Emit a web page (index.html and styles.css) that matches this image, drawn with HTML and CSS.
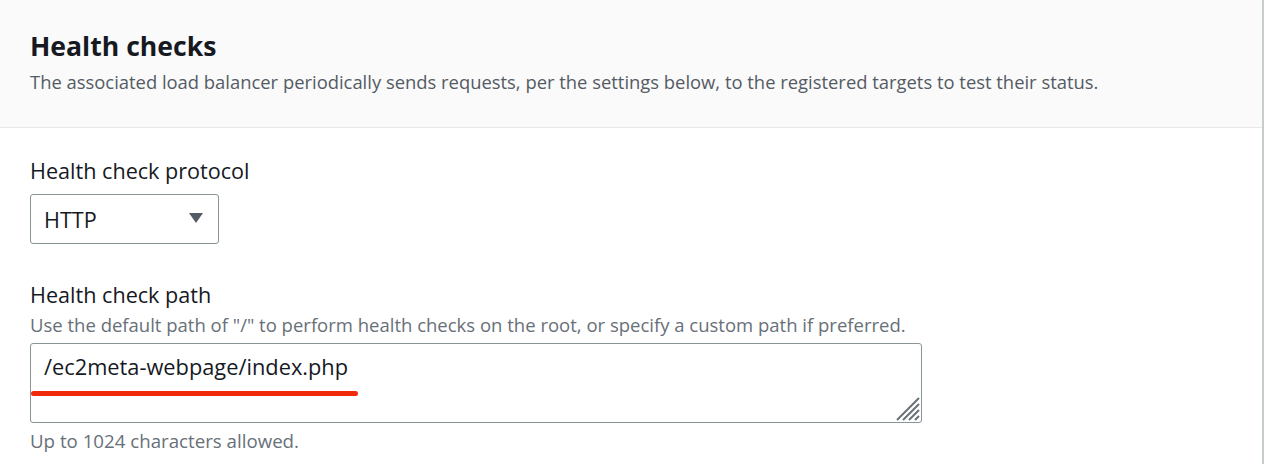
FILE: index.html
```html
<!DOCTYPE html>
<html>
<head>
<meta charset="utf-8">
<link rel="stylesheet" href="styles.css">
</head>
<body>
<div class="panel">
  <div class="header">
    <h2 class="title">Health checks</h2>
    <p class="desc">The associated load balancer periodically sends requests, per the settings below, to the registered targets to test their status.</p>
  </div>
  <div class="content">
    <div class="field">
      <div class="label">Health check protocol</div>
      <div class="select">
        <span class="select-value">HTTP</span>
        <svg class="caret" width="16" height="12" viewBox="0 0 16 12"><path d="M1 1 H15 L8 11 Z" fill="#545b64"/></svg>
      </div>
    </div>
    <div class="field">
      <div class="label">Health check path</div>
      <div class="hint">Use the default path of "/" to perform health checks on the root, or specify a custom path if preferred.</div>
      <div class="textarea">
        <span class="textarea-value">/ec2meta-webpage/index.php</span>
        <span class="mark"></span>
        <svg class="grip" width="26" height="26" viewBox="0 0 26 26"><path d="M25 3 L3 25 M25 9 L9 25 M25 15 L15 25 M25 21 L21 25" stroke="#6b7276" stroke-width="2"/></svg>
      </div>
      <div class="foot">Up to 1024 characters allowed.</div>
    </div>
  </div>
</div>
</body>
</html>
```
FILE: styles.css
```css
html, body {
  margin: 0;
  padding: 0;
  background: #ffffff;
}
body {
  font-family: "Open Sans", "Noto Sans", sans-serif;
  color: #16191f;
  width: 1264px;
  height: 464px;
  overflow: hidden;
}
.panel {
  width: 1262px;
  height: 464px;
  border-right: 2px solid #c7cccf;
}
.header {
  background: #fafafa;
  border-bottom: 1px solid #e6e8e9;
  padding: 29px 30px 0 30px;
  height: 128px;
  box-sizing: border-box;
}
.title {
  margin: 0;
  font-size: 26.6px;
  font-weight: 700;
  line-height: 34px;
  color: #16191f;
}
.desc {
  margin: 7px 0 0 0;
  font-size: 18.4px;
  line-height: 24px;
  color: #545b64;
}
.content {
  padding: 29px 30px 0 30px;
  display: flex;
  flex-direction: column;
  gap: 37px;
}
.field {
  display: flex;
  flex-direction: column;
}
.label {
  font-size: 21.6px;
  line-height: 28px;
  color: #16191f;
}
.select {
  margin-top: 9px;
  width: 189px;
  height: 50px;
  box-sizing: border-box;
  border: 1px solid #879596;
  border-radius: 3px;
  display: flex;
  align-items: center;
  justify-content: space-between;
  padding: 0 14px 0 13px;
}
.select-value {
  font-size: 21.6px;
  color: #16191f;
}
.caret {
  margin-top: -2px;
}
.hint {
  margin-top: 4px;
  font-size: 18.5px;
  line-height: 24px;
  color: #687078;
}
.textarea {
  position: relative;
  margin-top: 6px;
  width: 892px;
  height: 80px;
  box-sizing: border-box;
  border: 1px solid #879596;
  border-radius: 3px;
  padding: 9px 13px;
}
.textarea-value {
  font-size: 21.8px;
  line-height: 28px;
  color: #16191f;
}
.mark {
  position: absolute;
  left: 0;
  top: 47px;
  width: 327px;
  height: 5px;
  border-radius: 3px;
  background: #f22a0c;
}
.grip {
  position: absolute;
  right: 1px;
  bottom: 1px;
}
.foot {
  margin-top: 6px;
  font-size: 18.7px;
  line-height: 24px;
  color: #687078;
}
```
